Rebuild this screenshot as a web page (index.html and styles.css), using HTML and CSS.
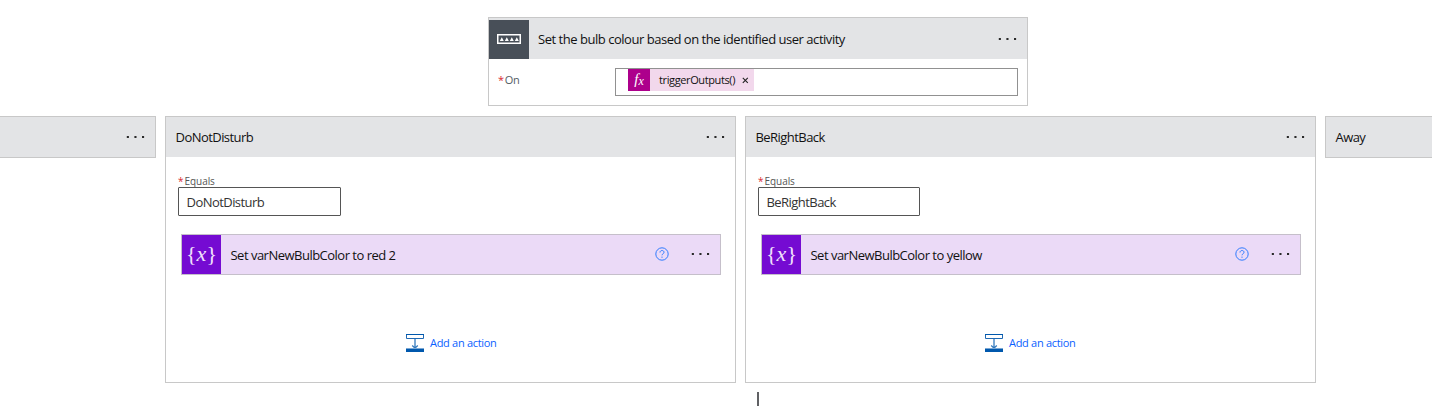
FILE: index.html
```html
<!DOCTYPE html>
<html lang="en">
<head>
<meta charset="utf-8">
<title>Flow designer</title>
<link rel="stylesheet" href="styles.css">
</head>
<body>
<svg class="defs" width="0" height="0" aria-hidden="true">
  <symbol id="dots" viewBox="0 0 20 4"><path d="M.8 .9h2.1v2.1H.8zM8.4 .9h2.1v2.1H8.4zM16 .9h2.1v2.1H16z" fill="#292929"/></symbol>
  <symbol id="help" viewBox="0 0 14 14"><circle cx="7" cy="7" r="6.2" fill="none" stroke="#2f7bff"/><path d="M5 5.5C5 2.9 9 2.9 9 5.3C9 6.8 7 6.8 7 8.3M7 9.6v1.2" fill="none" stroke="#2f7bff"/></symbol>
  <symbol id="insert" viewBox="0 0 19 19"><path d="M.5 1v3.5h17V1" fill="#fff" stroke="#1f69b3"/><path d="M0 .5h18" stroke="#0058ad"/><path d="M9 5v9M6.2 11.5L9 14.2l2.8-2.7" fill="none" stroke="#347abd" stroke-width="1.3"/><path d="M0 15h18v3H0z" fill="#0058ad"/><path d="M0 14.5h18" stroke="#7aa7d4"/></symbol>
</svg>
<main class="canvas">
  <section class="switch">
    <header class="head switch-head">
      <span class="switch-icon"><svg width="24" height="10" viewBox="0 0 24 10"><rect x=".75" y=".75" width="22.5" height="8.5" fill="none" stroke="#fff" stroke-width="1.5"/><path d="M2.8 7l2-3.8 2 3.8zM7.8 7l2-3.8 2 3.8zM12.8 7l2-3.8 2 3.8zM17.8 7l2-3.8 2 3.8z" fill="#fff"/></svg></span>
      <span class="title switch-title">Set the bulb colour based on the identified user activity</span>
      <svg class="dots" width="20" height="4"><use href="#dots"/></svg>
    </header>
    <div class="switch-body">
      <label class="on"><i class="req">*</i>On</label>
      <div class="on-input">
        <span class="token"><span class="fx">f<small>x</small></span><span class="token-text">triggerOutputs()</span><svg class="close" width="7" height="7" viewBox="0 0 7 7"><path d="M.8.8l5 5M5.8.8l-5 5" stroke="#222" stroke-width="1.1"/></svg></span>
      </div>
    </div>
  </section>
  <div class="cases">
    <section class="case closed previous"><header class="head"><svg class="dots" width="20" height="4"><use href="#dots"/></svg></header></section>
    <section class="case">
      <header class="head"><span class="title name-dnd">DoNotDisturb</span><svg class="dots" width="20" height="4"><use href="#dots"/></svg></header>
      <div class="case-body">
        <label class="equals"><i class="req">*</i>Equals</label>
        <div class="value name-dnd">DoNotDisturb</div>
        <div class="action">
          <span class="var-icon"><b>{</b><em>x</em><b>}</b></span>
          <span class="title act-red">Set varNewBulbColor to red 2</span>
          <svg class="help" width="14" height="14"><use href="#help"/></svg>
          <svg class="dots" width="20" height="4"><use href="#dots"/></svg>
        </div>
        <a class="add"><svg width="19" height="19"><use href="#insert"/></svg><span>Add an action</span></a>
      </div>
    </section>
    <section class="case second">
      <header class="head"><span class="title name-brb">BeRightBack</span><svg class="dots" width="20" height="4"><use href="#dots"/></svg></header>
      <div class="case-body">
        <label class="equals"><i class="req">*</i>Equals</label>
        <div class="value name-brb">BeRightBack</div>
        <div class="action">
          <span class="var-icon"><b>{</b><em>x</em><b>}</b></span>
          <span class="title act-yellow">Set varNewBulbColor to yellow</span>
          <svg class="help" width="14" height="14"><use href="#help"/></svg>
          <svg class="dots" width="20" height="4"><use href="#dots"/></svg>
        </div>
        <a class="add"><svg width="19" height="19"><use href="#insert"/></svg><span>Add an action</span></a>
      </div>
    </section>
    <section class="case closed next"><header class="head"><span class="title name-away">Away</span></header></section>
  </div>
  <div class="connector"></div>
</main>
</body>
</html>
```
FILE: styles.css
```css
* { box-sizing: border-box; }
body { margin: 0; background: #fff; font-family: "Open Sans", "Noto Sans", sans-serif; font-size: 13px; color: #111; }
.defs { position: absolute; }
.canvas { width: 1432px; height: 406px; overflow: hidden; padding-top: 17px; }
svg { display: block; flex: none; }
.title, .value, .token-text, .add span, label { white-space: nowrap; }
.head { display: flex; align-items: center; height: 40px; padding: 0 9px 0 9.5px; background: #e3e4e6; }
.dots { margin-left: auto; }

.switch { width: 540px; height: 89px; margin-left: 488px; border: 1px solid #c8c8c8; }
.switch-head { height: 41px; padding-left: 0; }
.switch-icon { display: flex; align-items: center; justify-content: center; width: 40px; height: 39px; margin-top: 1px; background: #484f58; }
.switch-title { margin: 1px 0 0 9px; letter-spacing: -0.47px; }
.switch-body { display: flex; padding: 9px 9px 0; }
.req { color: #d8282f; font-style: normal; margin-right: 1px; }
.on { width: 117px; padding-top: 4px; font-size: 11px; line-height: 16px; letter-spacing: -0.3px; color: #555c64; }
.on-input { width: 403px; height: 28px; padding-left: 12px; border: 1px solid #919191; }
.token { display: flex; align-items: center; width: 126px; height: 22px; background: #f2d8ec; }
.fx { width: 22px; height: 22px; background: #ad008c; color: #fff; text-align: center; font: italic 15px/20px "Liberation Serif", serif; }
.fx small { font-size: 12px; position: relative; top: 1px; }
.token-text { width: 78px; margin: -2px 0 0 9px; font-size: 11px; letter-spacing: -0.38px; }
.close { margin-left: 5px; }

.cases { display: flex; gap: 9px; margin-top: 10px; align-items: flex-start; }
.case { flex: none; width: 571px; height: 267px; border: 1px solid #c8c8c8; }
.closed { height: 42px; }
.previous { width: 156px; border-left: 0; }
.next { width: 571px; }
.name-dnd, .name-brb, .name-away { letter-spacing: -0.55px; }
.act-red, .act-yellow { letter-spacing: -0.51px; }
.case-body { display: flex; flex-direction: column; align-items: flex-start; padding: 17px 14px 0 12px; }
.equals { height: 13px; font-size: 10px; line-height: 15px; letter-spacing: -0.05px; color: #555; }
.value { width: 163px; height: 29px; padding-left: 7.5px; border: 1px solid #555; border-radius: 1px; line-height: 28px; color: #333; }
.second .value { width: 162px; }
.action { display: flex; align-items: center; width: 540px; height: 41px; margin: 18px 0 0 3px; border: 1px solid #c5bfca; background: #ebdaf7; padding-right: 9px; }
.var-icon { display: flex; align-items: center; justify-content: center; width: 39px; height: 39px; background: #750bd2; color: #f1e2fc; font: 22px/34px "Liberation Serif", serif; }
.var-icon b { font-weight: normal; font-size: 22px; margin-top: -2px; }
.var-icon em { font-size: 22px; margin-top: -1px; }
.action .title { margin: 0 0 0 9.5px; }
.action .help { margin: -2px 0 0 auto; }
.action .dots { margin: -2px 0 0 22px; }
.add { display: flex; align-items: center; gap: 5px; align-self: flex-start; margin: 59px 0 0 228px; color: #0b5fff; font-size: 11px; letter-spacing: -0.3px; }
.add span { margin-top: -2px; }
.second .add { margin-left: 227px; }
.connector { width: 2px; height: 14px; margin: 9px 0 0 757px; background: #606164; }
```
